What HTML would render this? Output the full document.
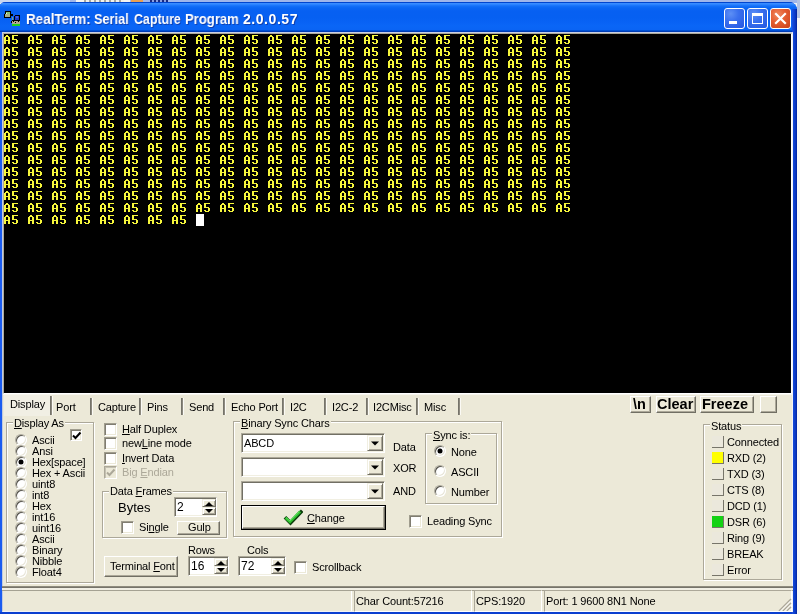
<!DOCTYPE html>
<html><head><meta charset="utf-8">
<style>
*{box-sizing:border-box}
html,body{margin:0;padding:0}
body{width:800px;height:614px;overflow:hidden;position:relative;background:#eef1f6;font-family:"Liberation Sans",sans-serif;font-size:11px;color:#000}
.a{position:absolute}
.w{will-change:transform}
.t{position:absolute;will-change:transform;white-space:pre;line-height:13px;font-size:11px;letter-spacing:-0.15px}
u{text-decoration:underline;text-underline-offset:1px}
.grp{position:absolute;border:1px solid #aca899;box-shadow:1px 1px 0 #fff, inset 1px 1px 0 #fff}
.gt{position:absolute;will-change:transform;white-space:pre;line-height:13px;font-size:11px;letter-spacing:-0.15px;background:#ece9d8;padding:0 1px}
.cb{position:absolute;width:13px;height:13px;background:#fff;border-top:1px solid #a09d8e;border-left:1px solid #a09d8e;border-right:1px solid #fff;border-bottom:1px solid #fff;box-shadow:inset 1px 1px 0 #807d71, inset -1px -1px 0 #ece9d8}
.rb{position:absolute;width:12px;height:12px;border-radius:50%;background:#fff;border:1px solid;border-color:#aeab9e #fff #fff #aeab9e;box-shadow:inset 1px 1px 0 #55534c, inset -1px -1px 0 #e8e5d8}
.btn{position:absolute;background:#ece9d8;border:1px solid;border-color:#fff #716f64 #716f64 #fff;box-shadow:inset -1px -1px 0 #aca899}
.edit{position:absolute;background:#fff;border:1px solid;border-color:#aca899 #fff #fff #aca899;box-shadow:inset 1px 1px 0 #716f64, inset -1px -1px 0 #f1efe2}
.sb{position:absolute;background:#ece9d8;border:1px solid;border-color:#f1efe2 #716f64 #716f64 #f1efe2;box-shadow:inset 1px 1px 0 #fff, inset -1px -1px 0 #aca899}
.led{position:absolute;width:12px;height:12px;border-right:1px solid #77756a;border-bottom:1px solid #77756a;background:#ebe8dc}
.sep{position:absolute;width:3px;border-left:1px solid #75736a;border-right:1px solid #fbfaf5;background:#8d8a7f}
.sp{position:absolute;border:1px solid;border-color:#aca899 #fff #fff #aca899}
</style></head><body>
<div class="a" style="left:0;top:0;width:800px;height:3px;background:#9fb6ea"></div>
<div class="a" style="left:0;top:0;width:70px;height:3px;background:#c8d6f0"></div>
<div class="a" style="left:76px;top:0;width:54px;height:3px;background:#f4f4f0"></div>
<div class="a" style="left:84px;top:0;width:40px;height:2px;background:repeating-linear-gradient(90deg,#a8a8a0 0 2px,#f0f0ea 2px 5px)"></div>
<div class="a" style="left:131px;top:0;width:12px;height:3px;background:#e8a050"></div>
<div class="a" style="left:150px;top:0;width:18px;height:2px;background:repeating-linear-gradient(90deg,#1a2a80 0 2px,#8aa0e0 2px 4px)"></div>
<div class="a" style="left:797px;top:0;width:3px;height:18px;background:#b4c4e4"></div>
<div class="a" style="left:797px;top:18px;width:3px;height:596px;background:#f7f7f7"></div>
<div class="a" style="left:-2px;top:2px;width:799px;height:612px;background:#0a3fd8;border-radius:8px 8px 0 0"></div>
<div class="a" style="left:0;top:32px;width:2px;height:582px;background:#1b5cf0"></div>
<div class="a" style="left:0;top:612px;width:797px;height:2px;background:#0a3fd0"></div>
<div class="a" style="left:-2px;top:2px;width:799px;height:30px;border-radius:8px 8px 0 0;background:linear-gradient(180deg,#0046d0 0,#0046d0 1px,#3d8fff 1px,#3489ff 2px,#227dff 3px,#1470f8 4px,#0a66f4 6px,#0760f2 9px,#0660f2 15px,#0862f4 20px,#0a66f6 24px,#0a64f4 27.5px,#0052d8 28.5px,#003cb4 29.5px,#003cb4 30px)"></div>
<div class="a" style="left:792px;top:9px;width:5px;height:605px;background:linear-gradient(90deg,#1a50e0,#0c40d0 45%,#0834bc 75%,#00229c)"></div>
<svg class="a" style="left:2px;top:9px" width="20" height="18" shape-rendering="crispEdges">
<rect x="3" y="2" width="6" height="1" fill="#000"/><rect x="3" y="3" width="1" height="2" fill="#000"/><rect x="2" y="5" width="1" height="3" fill="#000"/><rect x="2" y="8" width="7" height="1" fill="#000"/><rect x="8" y="2" width="1" height="7" fill="#000"/>
<rect x="4" y="3" width="4" height="2" fill="#88c070"/><rect x="3" y="5" width="5" height="3" fill="#a8b088"/><rect x="4" y="4" width="1" height="1" fill="#e8ffe0"/>
<rect x="9" y="5" width="2" height="2" fill="#000"/><rect x="10" y="8" width="1" height="3" fill="#80a078"/><rect x="10" y="11" width="2" height="1" fill="#000"/>
<rect x="12" y="6" width="6" height="6" fill="#000"/><rect x="12" y="6" width="1" height="1" fill="#3050e0"/><rect x="13" y="7" width="4" height="4" fill="#2040c8"/><rect x="14" y="7" width="2" height="2" fill="#4060f0"/>
<rect x="10" y="12" width="8" height="3" fill="#b0a890"/><rect x="11" y="12" width="1" height="1" fill="#000"/><rect x="13" y="13" width="1" height="1" fill="#000"/><rect x="16" y="12" width="1" height="1" fill="#000"/><rect x="9" y="12" width="1" height="2" fill="#000"/>
<rect x="10" y="15" width="8" height="2" fill="#20d020"/>
</svg>
<div class="a w" style="left:26px;top:11px;white-space:pre;font-weight:bold;font-size:14px;letter-spacing:0px;line-height:17px;color:#fff;text-shadow:1px 1px 0 #1040b0;transform:scaleX(0.96);transform-origin:0 0">RealTerm:</div>
<div class="a w" style="left:94px;top:11px;white-space:pre;font-weight:bold;font-size:14px;letter-spacing:0px;line-height:17px;color:#fff;text-shadow:1px 1px 0 #1040b0;transform:scaleX(0.91);transform-origin:0 0">Serial</div>
<div class="a w" style="left:134px;top:11px;white-space:pre;font-weight:bold;font-size:14px;letter-spacing:0px;line-height:17px;color:#fff;text-shadow:1px 1px 0 #1040b0;transform:scaleX(0.885);transform-origin:0 0">Capture</div>
<div class="a w" style="left:185px;top:11px;white-space:pre;font-weight:bold;font-size:14px;letter-spacing:0px;line-height:17px;color:#fff;text-shadow:1px 1px 0 #1040b0;transform:scaleX(0.935);transform-origin:0 0">Program</div>
<div class="a w" style="left:243px;top:11px;white-space:pre;font-weight:bold;font-size:14px;letter-spacing:0.55px;line-height:17px;color:#fff;text-shadow:1px 1px 0 #1040b0;transform:scaleX(1.0);transform-origin:0 0">2.0.0.57</div>
<div class="a" style="left:724px;top:8px;width:21px;height:21px;border:1px solid #fff;border-radius:3px;background:radial-gradient(circle at 30% 25%,#5d8ff5 0,#3a70ee 40%,#2457e0 100%);overflow:hidden"><div class="a" style="left:4px;top:12px;width:8px;height:3px;background:#fff"></div></div>
<div class="a" style="left:747px;top:8px;width:21px;height:21px;border:1px solid #fff;border-radius:3px;background:radial-gradient(circle at 30% 25%,#5d8ff5 0,#3a70ee 40%,#2457e0 100%);overflow:hidden"><div class="a" style="left:4px;top:4px;width:11px;height:11px;border:1px solid #fff;border-top-width:3px"></div></div>
<div class="a" style="left:770px;top:8px;width:21px;height:21px;border:1px solid #fff;border-radius:3px;background:radial-gradient(circle at 35% 30%,#f08a60 0,#e35c30 45%,#c8401c 100%);overflow:hidden"><svg class="a" style="left:0;top:0" width="19" height="19"><path d="M5 5 L14 14 M14 5 L5 14" stroke="#fff" stroke-width="2.2" stroke-linecap="square"/></svg></div>
<div class="a" style="left:2px;top:32px;width:791px;height:580px;background:#ece9d8;border:1px solid #f2f2f4;border-top-color:#c8d0e4;border-left-color:#c0cae0"></div>
<div class="a" style="left:3px;top:33px;width:789px;height:361px;background:#000;border:1px solid;border-color:#aca899 #fff #fff #aca899"></div>
<svg class="a" style="left:4px;top:34px" width="786" height="358" shape-rendering="crispEdges">
<defs><pattern id="p" x="0" y="0" width="24" height="12" patternUnits="userSpaceOnUse"><g fill="#f6f63c"><rect x="2" y="1" width="2" height="1"/><rect x="1" y="2" width="4" height="1"/><rect x="0" y="3" width="2" height="7"/><rect x="4" y="3" width="2" height="7"/><rect x="2" y="6" width="2" height="1"/>
<rect x="8" y="1" width="6" height="1"/><rect x="8" y="2" width="2" height="3"/><rect x="8" y="5" width="5" height="1"/><rect x="12" y="6" width="2" height="3"/><rect x="8" y="8" width="2" height="1"/><rect x="9" y="9" width="4" height="1"/></g></pattern></defs>
<rect x="0" y="0" width="576" height="180" fill="url(#p)"/>
<rect x="0" y="180" width="192" height="12" fill="url(#p)"/>
<rect x="192" y="180" width="8" height="12" fill="#fff"/>
</svg>
<div class="a" style="left:3px;top:394px;width:789px;height:1px;background:#f7f6ee"></div>
<div class="a" style="left:4px;top:395px;width:46px;height:21px;background:#f1efe4"></div>
<div class="t" style="left:10px;top:398px;">Display</div>
<div class="t" style="left:56px;top:401px;">Port</div>
<div class="t" style="left:98px;top:401px;">Capture</div>
<div class="t" style="left:147px;top:401px;">Pins</div>
<div class="t" style="left:189px;top:401px;">Send</div>
<div class="t" style="left:231px;top:401px;">Echo Port</div>
<div class="t" style="left:290px;top:401px;">I2C</div>
<div class="t" style="left:332px;top:401px;">I2C-2</div>
<div class="t" style="left:373px;top:401px;">I2CMisc</div>
<div class="t" style="left:424px;top:401px;">Misc</div>
<div class="sep" style="left:50px;top:396px;height:19px"></div>
<div class="sep" style="left:90px;top:398px;height:17px"></div>
<div class="sep" style="left:139px;top:398px;height:17px"></div>
<div class="sep" style="left:181px;top:398px;height:17px"></div>
<div class="sep" style="left:223px;top:398px;height:17px"></div>
<div class="sep" style="left:282px;top:398px;height:17px"></div>
<div class="sep" style="left:324px;top:398px;height:17px"></div>
<div class="sep" style="left:366px;top:398px;height:17px"></div>
<div class="sep" style="left:416px;top:398px;height:17px"></div>
<div class="sep" style="left:458px;top:398px;height:17px"></div>
<div class="btn" style="left:630px;top:396px;width:21px;height:17px"></div><div class="a w" style="left:633px;top:396px;font-weight:bold;font-size:14.5px;line-height:17px;white-space:pre">\n</div>
<div class="btn" style="left:656px;top:396px;width:40px;height:17px"></div><div class="a w" style="left:657px;top:396px;font-weight:bold;font-size:14.5px;line-height:17px;white-space:pre">Clear</div>
<div class="btn" style="left:700px;top:396px;width:54px;height:17px"></div><div class="a w" style="left:702px;top:396px;font-weight:bold;font-size:14.5px;line-height:17px;white-space:pre">Freeze</div>
<div class="btn" style="left:760px;top:396px;width:17px;height:17px"></div><div class="a w" style="left:0px;top:396px;font-weight:bold;font-size:14.5px;line-height:17px;white-space:pre"></div>
<div class="grp" style="left:6px;top:422px;width:88px;height:161px"></div>
<div class="gt" style="left:13px;top:417px"><u>D</u>isplay As</div>
<div class="cb" style="left:70px;top:429px;width:12px;height:12px"></div>
<svg class="a" style="left:72px;top:431px" width="10" height="10"><path d="M1 4.5 L3.5 7 L8.5 1.5" stroke="#000" stroke-width="2" fill="none"/></svg>
<div class="rb" style="left:15px;top:434px"></div>
<div class="t" style="left:32px;top:434px;">Ascii</div>
<div class="rb" style="left:15px;top:445px"></div>
<div class="t" style="left:32px;top:445px;">Ansi</div>
<div class="rb" style="left:15px;top:456px"></div>
<div class="a" style="left:19px;top:460px;width:4px;height:4px;background:#000;border-radius:50%;box-shadow:0 0 0 0.5px #000"></div>
<div class="t" style="left:32px;top:456px;">Hex[space]</div>
<div class="rb" style="left:15px;top:467px"></div>
<div class="t" style="left:32px;top:467px;">Hex + Ascii</div>
<div class="rb" style="left:15px;top:478px"></div>
<div class="t" style="left:32px;top:478px;">uint8</div>
<div class="rb" style="left:15px;top:489px"></div>
<div class="t" style="left:32px;top:489px;">int8</div>
<div class="rb" style="left:15px;top:500px"></div>
<div class="t" style="left:32px;top:500px;">Hex</div>
<div class="rb" style="left:15px;top:511px"></div>
<div class="t" style="left:32px;top:511px;">int16</div>
<div class="rb" style="left:15px;top:522px"></div>
<div class="t" style="left:32px;top:522px;">uint16</div>
<div class="rb" style="left:15px;top:533px"></div>
<div class="t" style="left:32px;top:533px;">Ascii</div>
<div class="rb" style="left:15px;top:544px"></div>
<div class="t" style="left:32px;top:544px;">Binary</div>
<div class="rb" style="left:15px;top:555px"></div>
<div class="t" style="left:32px;top:555px;">Nibble</div>
<div class="rb" style="left:15px;top:566px"></div>
<div class="t" style="left:32px;top:566px;">Float4</div>
<div class="cb" style="left:104px;top:423px"></div>
<div class="t" style="left:122px;top:423px;"><u>H</u>alf Duplex</div>
<div class="cb" style="left:104px;top:437px"></div>
<div class="t" style="left:122px;top:437px;">new<u>L</u>ine mode</div>
<div class="cb" style="left:104px;top:452px"></div>
<div class="t" style="left:122px;top:452px;"><u>I</u>nvert Data</div>
<div class="a" style="left:104px;top:466px;width:13px;height:13px;border:1px solid;border-color:#aca899 #fff #fff #aca899;box-shadow:inset 1px 1px 0 #c4c1b2"></div>
<svg class="a" style="left:106px;top:468px" width="10" height="10"><path d="M1 4.5 L3.5 7 L8.5 1.5" stroke="#aca899" stroke-width="2" fill="none"/></svg>
<div class="t" style="left:122px;top:466px;color:#aca899">Big <u>E</u>ndian</div>
<div class="grp" style="left:102px;top:491px;width:125px;height:47px"></div>
<div class="gt" style="left:109px;top:485px">Data <u>F</u>rames</div>
<div class="a w" style="left:118px;top:500px;font-size:13px;line-height:15px;white-space:pre">Bytes</div>
<div class="edit" style="left:174px;top:497px;width:43px;height:20px"></div><div class="a w" style="left:177px;top:500px;font-size:12px;line-height:15px">2</div><div class="sb" style="left:202px;top:499px;width:14px;height:8px"></div><div class="sb" style="left:202px;top:507px;width:14px;height:8px"></div><svg class="a" style="left:202px;top:499px" width="14" height="16"><path d="M3 7 L11 7 L7 3 Z" fill="#000"/><path d="M3 10 L11 10 L7 14 Z" fill="#000"/></svg>
<div class="cb" style="left:121px;top:521px"></div>
<div class="t" style="left:139px;top:521px;">Si<u>n</u>gle</div>
<div class="btn" style="left:177px;top:521px;width:43px;height:14px"></div>
<div class="t" style="left:188px;top:521px;">Gulp</div>
<div class="btn" style="left:104px;top:556px;width:74px;height:21px"></div>
<div class="t" style="left:110px;top:560px;">Terminal <u>F</u>ont</div>
<div class="t" style="left:188px;top:544px;">Rows</div>
<div class="edit" style="left:188px;top:556px;width:41px;height:20px"></div><div class="a w" style="left:191px;top:559px;font-size:12px;line-height:15px">16</div><div class="sb" style="left:214px;top:558px;width:14px;height:8px"></div><div class="sb" style="left:214px;top:566px;width:14px;height:8px"></div><svg class="a" style="left:214px;top:558px" width="14" height="16"><path d="M3 7 L11 7 L7 3 Z" fill="#000"/><path d="M3 10 L11 10 L7 14 Z" fill="#000"/></svg>
<div class="t" style="left:247px;top:544px;">Cols</div>
<div class="edit" style="left:238px;top:556px;width:48px;height:20px"></div><div class="a w" style="left:241px;top:559px;font-size:12px;line-height:15px">72</div><div class="sb" style="left:271px;top:558px;width:14px;height:8px"></div><div class="sb" style="left:271px;top:566px;width:14px;height:8px"></div><svg class="a" style="left:271px;top:558px" width="14" height="16"><path d="M3 7 L11 7 L7 3 Z" fill="#000"/><path d="M3 10 L11 10 L7 14 Z" fill="#000"/></svg>
<div class="cb" style="left:294px;top:561px"></div>
<div class="t" style="left:312px;top:561px;">Scrollback</div>
<div class="grp" style="left:233px;top:421px;width:269px;height:116px"></div>
<div class="gt" style="left:240px;top:417px"><u>B</u>inary Sync Chars</div>
<div class="edit" style="left:241px;top:433px;width:144px;height:20px"></div><div class="t" style="left:244px;top:437px;">ABCD</div><div class="sb" style="left:367px;top:435px;width:16px;height:16px"></div><svg class="a" style="left:367px;top:435px" width="16" height="16"><path d="M4 6.5 L12 6.5 L8 10.5 Z" fill="#000"/></svg>
<div class="edit" style="left:241px;top:457px;width:144px;height:20px"></div><div class="t" style="left:244px;top:461px;"></div><div class="sb" style="left:367px;top:459px;width:16px;height:16px"></div><svg class="a" style="left:367px;top:459px" width="16" height="16"><path d="M4 6.5 L12 6.5 L8 10.5 Z" fill="#000"/></svg>
<div class="edit" style="left:241px;top:481px;width:144px;height:20px"></div><div class="t" style="left:244px;top:485px;"></div><div class="sb" style="left:367px;top:483px;width:16px;height:16px"></div><svg class="a" style="left:367px;top:483px" width="16" height="16"><path d="M4 6.5 L12 6.5 L8 10.5 Z" fill="#000"/></svg>
<div class="t" style="left:393px;top:441px;">Data</div>
<div class="t" style="left:393px;top:462px;">XOR</div>
<div class="t" style="left:393px;top:485px;">AND</div>
<div class="a" style="left:241px;top:505px;width:145px;height:25px;border:1px solid #000"></div>
<div class="btn" style="left:242px;top:506px;width:143px;height:23px"></div>
<svg class="a" style="left:283px;top:508px" width="20" height="19"><path d="M3.2 10.5 L7.5 15 L18 4" stroke="#0b3d0b" stroke-width="3.6" fill="none" stroke-linecap="square"/><path d="M2.5 9.8 L7 14 L17.2 3.5" stroke="#2fbf2f" stroke-width="2.6" fill="none"/><path d="M3 9.5 L7 13 L16 4" stroke="#5ee05e" stroke-width="0.9" fill="none"/></svg>
<div class="t" style="left:307px;top:512px;"><u>C</u>hange</div>
<div class="grp" style="left:425px;top:433px;width:72px;height:71px"></div>
<div class="gt" style="left:432px;top:429px"><u>S</u>ync is:</div>
<div class="rb" style="left:434px;top:445px"></div>
<div class="a" style="left:438px;top:449px;width:4px;height:4px;background:#000;border-radius:50%;box-shadow:0 0 0 0.5px #000"></div>
<div class="t" style="left:451px;top:446px;">None</div>
<div class="rb" style="left:434px;top:465px"></div>
<div class="t" style="left:451px;top:466px;">ASCII</div>
<div class="rb" style="left:434px;top:485px"></div>
<div class="t" style="left:451px;top:486px;">Number</div>
<div class="cb" style="left:409px;top:515px"></div>
<div class="t" style="left:427px;top:515px;">Leading Sync</div>
<div class="grp" style="left:703px;top:424px;width:79px;height:156px"></div>
<div class="gt" style="left:710px;top:420px">Status</div>
<div class="led" style="left:712px;top:436px;"></div>
<div class="t" style="left:727px;top:436px;">Connected</div>
<div class="led" style="left:712px;top:452px;background:#ffff00;"></div>
<div class="t" style="left:727px;top:452px;">RXD (2)</div>
<div class="led" style="left:712px;top:468px;"></div>
<div class="t" style="left:727px;top:468px;">TXD (3)</div>
<div class="led" style="left:712px;top:484px;"></div>
<div class="t" style="left:727px;top:484px;">CTS (8)</div>
<div class="led" style="left:712px;top:500px;"></div>
<div class="t" style="left:727px;top:500px;">DCD (1)</div>
<div class="led" style="left:712px;top:516px;background:#14d214;"></div>
<div class="t" style="left:727px;top:516px;">DSR (6)</div>
<div class="led" style="left:712px;top:532px;"></div>
<div class="t" style="left:727px;top:532px;">Ring (9)</div>
<div class="led" style="left:712px;top:548px;"></div>
<div class="t" style="left:727px;top:548px;">BREAK</div>
<div class="led" style="left:712px;top:564px;"></div>
<div class="t" style="left:727px;top:564px;">Error</div>
<div class="a" style="left:2px;top:586px;width:791px;height:1px;background:#8f8c7e"></div>
<div class="a" style="left:2px;top:587px;width:791px;height:1px;background:#76746a"></div>
<div class="a" style="left:2px;top:588px;width:791px;height:2px;background:#f1efe4"></div>
<div class="a" style="left:2px;top:590px;width:791px;height:1px;background:#a5a293"></div>
<div class="sp" style="left:354px;top:590px;width:118px;height:22px"></div>
<div class="sp" style="left:474px;top:590px;width:68px;height:22px"></div>
<div class="sp" style="left:544px;top:590px;width:248px;height:22px"></div>
<div class="a" style="left:351px;top:591px;width:1px;height:20px;background:#fff"></div>
<div class="t" style="left:356px;top:595px;">Char Count:57216</div>
<div class="t" style="left:476px;top:595px;">CPS:1920</div>
<div class="t" style="left:546px;top:595px;">Port: 1 9600 8N1 None</div>
<svg class="a" style="left:778px;top:598px" width="14" height="13"><path d="M13 1 L1 13 M13 5 L5 13 M13 9 L9 13" stroke="#aca899" stroke-width="1.5"/><path d="M13 2.5 L2.5 13 M13 6.5 L6.5 13 M13 10.5 L10.5 13" stroke="#fff" stroke-width="1"/></svg>
</body></html>
